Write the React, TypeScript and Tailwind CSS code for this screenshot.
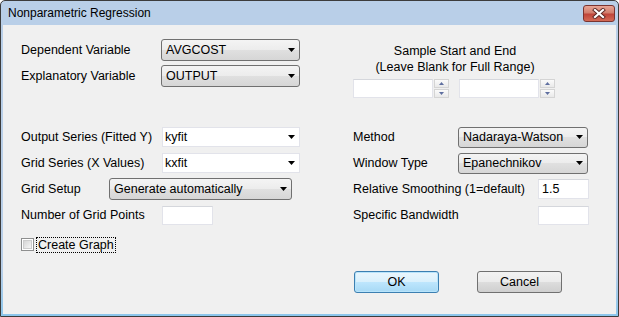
import React from "react";

const ui = "font-['Liberation_Sans',Arial,sans-serif] text-[12.5px] text-black";

function Arrow() {
  return (
    <svg width="7" height="4" viewBox="0 0 7 4">
      <path d="M0 0h7L3.5 4z" fill="#000" />
    </svg>
  );
}

function DropDown({ value, className }: { value: string; className: string }) {
  return (
    <div
      className={`flex items-center justify-between rounded-[3px] border border-[#707070] bg-[linear-gradient(to_bottom,#f4f4f4,#ececec_50%,#e0e0e0_50%,#d6d6d6)] pl-[4px] pr-[4px] ${className}`}
    >
      <span className="leading-none">{value}</span>
      <Arrow />
    </div>
  );
}

function Combo({ value }: { value: string }) {
  return (
    <div className="flex h-[20px] w-[138px] items-center justify-between border border-[#e2e3ea] bg-white pl-[2px] pr-[4px]">
      <span className="leading-none">{value}</span>
      <Arrow />
    </div>
  );
}

function TextBox({ value = "", className }: { value?: string; className: string }) {
  return (
    <div
      className={`flex items-center border border-[#e2e3ea] border-t-[#d5d7dc] bg-white pl-[3px] ${className}`}
    >
      <span className="leading-none">{value}</span>
    </div>
  );
}

function SpinHalf({ up }: { up?: boolean }) {
  return (
    <div className="flex h-[9px] w-[15px] items-center justify-center border border-[#d4d4d4] bg-[linear-gradient(to_bottom,#fbfbfb,#e9e9e9)]">
      <svg width="5" height="3" viewBox="0 0 5 3">
        <path d={up ? "M0 3h5L2.5 0z" : "M0 0h5L2.5 3z"} fill="#5f6fa0" />
      </svg>
    </div>
  );
}

function Spinner() {
  return (
    <div className="flex items-start">
      <TextBox className="h-[19px] w-[80px]" />
      <div className="ml-[1px] flex flex-col gap-[1px]">
        <SpinHalf up />
        <SpinHalf />
      </div>
    </div>
  );
}

export default function App() {
  return (
    <div
      className={`${ui} flex h-[317px] w-[619px] flex-col rounded-t-[5px] border border-[#3c3c3c] bg-[linear-gradient(to_bottom,#b9cfe8,#b9cfe8_85%,#8cc6ec)] px-[2px] pb-[2px]`}
    >
      {/* title bar */}
      <div className="flex h-[24px] items-center justify-between pl-[5px] pr-[1px]">
        <span className="text-[12px] leading-none">Nonparametric Regression</span>
        <div className="flex h-[17px] w-[32px] items-center justify-center rounded-[3px] border border-[#7a3430] bg-[linear-gradient(to_bottom,#e8a595,#d27e6d_45%,#c0453a_55%,#d46a56)]">
          <svg width="14" height="11" viewBox="0 0 14 11">
            <path d="M3 2l8 7M11 2l-8 7" stroke="#5a2622" strokeWidth="4" strokeLinecap="square" />
            <path d="M3 2l8 7M11 2l-8 7" stroke="#fff" strokeWidth="2.2" strokeLinecap="square" />
          </svg>
        </div>
      </div>

      {/* client */}
      <div className="flex flex-1 flex-col bg-[#f0f0f0] pl-[18px] pt-[14px]">
        <div className="flex items-start">
          <div className="flex flex-col gap-[4px]">
            <div className="flex h-[22px] items-center">
              <span className="w-[140px]">Dependent Variable</span>
              <DropDown value="AVGCOST" className="h-[22px] w-[139px]" />
            </div>
            <div className="flex h-[22px] items-center">
              <span className="w-[140px]">Explanatory Variable</span>
              <DropDown value="OUTPUT" className="h-[22px] w-[139px]" />
            </div>
          </div>

          <div className="ml-[53px] flex w-[204px] flex-col pt-[4px]">
            <div className="text-center leading-[16px]">
              <div>Sample Start and End</div>
              <div>(Leave Blank for Full Range)</div>
            </div>
            <div className="mt-[4px] flex gap-[10px]">
              <Spinner />
              <Spinner />
            </div>
          </div>
        </div>

        <div className="mt-[26px] flex items-start">
          <div className="flex w-[279px] flex-col">
            <div className="flex h-[26px] items-center">
              <span className="w-[141px]">Output Series (Fitted Y)</span>
              <Combo value="kyfit" />
            </div>
            <div className="flex h-[26px] items-center">
              <span className="w-[141px]">Grid Series (X Values)</span>
              <Combo value="kxfit" />
            </div>
            <div className="flex h-[26px] items-center">
              <span className="w-[88px]">Grid Setup</span>
              <DropDown value="Generate automatically" className="h-[22px] w-[183px]" />
            </div>
            <div className="flex h-[26px] items-center">
              <span className="w-[141px]">Number of Grid Points</span>
              <TextBox className="h-[19px] w-[51px]" />
            </div>
            <div className="mt-[8px] flex h-[17px] items-center">
              <div className="flex h-[13px] w-[13px] items-center justify-center border border-[#8e8f8f] bg-white">
                <div className="h-[9px] w-[9px] border border-[#cdcdcd] bg-[linear-gradient(135deg,#d6d6d6,#f6f6f6)]" />
              </div>
              <span className="ml-[2px] border border-dotted border-black px-[1px] leading-[14px]">
                Create Graph
              </span>
            </div>
          </div>

          <div className="ml-[53px] flex flex-col">
            <div className="flex h-[26px] items-center">
              <span className="w-[105px]">Method</span>
              <DropDown value="Nadaraya-Watson" className="h-[21px] w-[130px]" />
            </div>
            <div className="flex h-[26px] items-center">
              <span className="w-[105px]">Window Type</span>
              <DropDown value="Epanechnikov" className="h-[21px] w-[130px]" />
            </div>
            <div className="flex h-[26px] items-center">
              <span className="w-[185px]">Relative Smoothing (1=default)</span>
              <TextBox value="1.5" className="h-[20px] w-[51px]" />
            </div>
            <div className="flex h-[26px] items-center">
              <span className="w-[185px]">Specific Bandwidth</span>
              <TextBox className="h-[19px] w-[51px]" />
            </div>
          </div>
        </div>

        <div className="ml-[333px] mt-[18px] flex gap-[38px]">
          <button className="flex h-[22px] w-[85px] items-center justify-center rounded-[3px] border border-[#3c7fb1] bg-[linear-gradient(to_bottom,#eaf6fd,#d9f0fc_50%,#bee6fd_50%,#a7d9f5)] shadow-[inset_0_0_0_1px_#b8e4fb]">
            OK
          </button>
          <button className="flex h-[22px] w-[85px] items-center justify-center rounded-[3px] border border-[#707070] bg-[linear-gradient(to_bottom,#f2f2f2,#ebebeb_50%,#dddddd_50%,#cfcfcf)]">
            Cancel
          </button>
        </div>
      </div>
    </div>
  );
}
